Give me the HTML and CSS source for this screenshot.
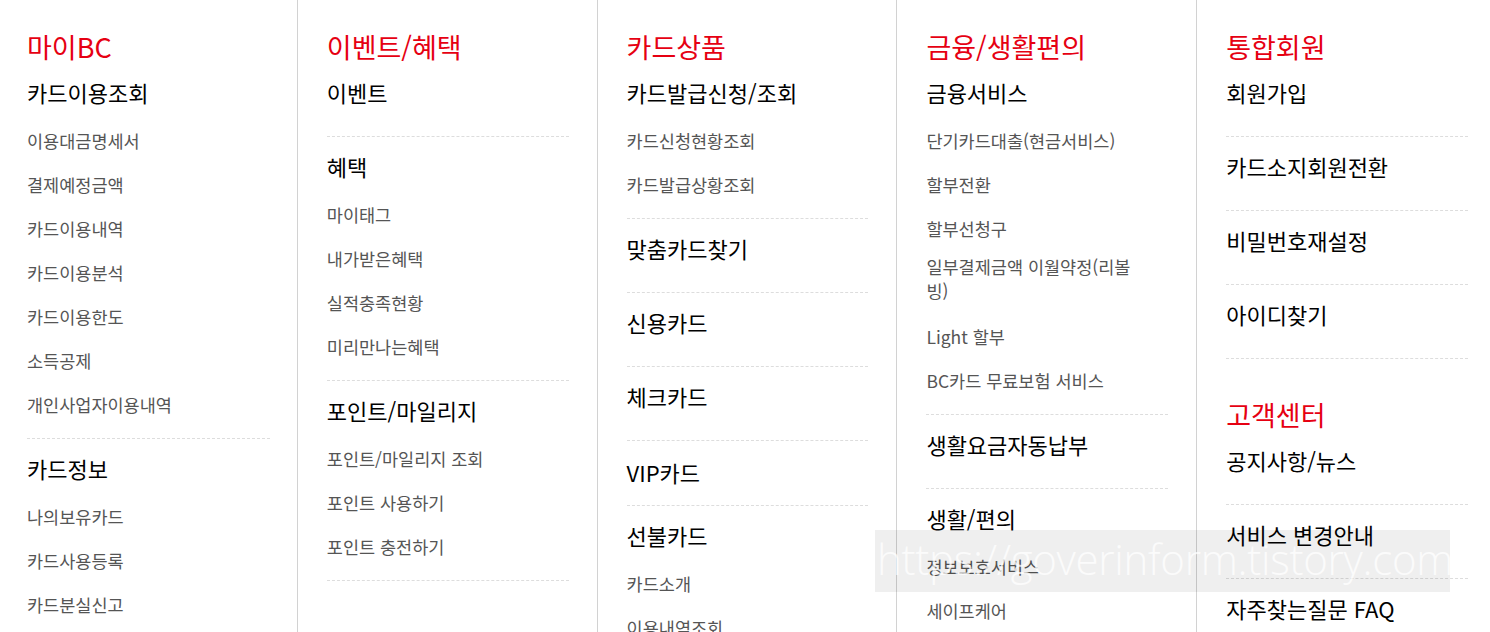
FILE: index.html
```html
<!DOCTYPE html>
<html lang="ko">
  <head>
    <title>BC카드 전체메뉴</title>
    <meta charset="utf-8" />
    <link rel="stylesheet" href="styles.css">
  </head>
  <body>
    <div class="sitemap">
      <div class="col">
        <h2 class="title">마이BC</h2>
        <div class="group">
          <h3 class="sub">카드이용조회</h3>
          <ul class="items">
            <li>이용대금명세서</li>
            <li>결제예정금액</li>
            <li>카드이용내역</li>
            <li>카드이용분석</li>
            <li>카드이용한도</li>
            <li>소득공제</li>
            <li>개인사업자이용내역</li>
          </ul>
        </div>
        <div class="group">
          <h3 class="sub">카드정보</h3>
          <ul class="items">
            <li>나의보유카드</li>
            <li>카드사용등록</li>
            <li>카드분실신고</li>
          </ul>
        </div>
      </div>

      <div class="col">
        <h2 class="title">이벤트/혜택</h2>
        <div class="group">
          <h3 class="sub">이벤트</h3>
        </div>
        <div class="group">
          <h3 class="sub">혜택</h3>
          <ul class="items">
            <li>마이태그</li>
            <li>내가받은혜택</li>
            <li>실적충족현황</li>
            <li>미리만나는혜택</li>
          </ul>
        </div>
        <div class="group">
          <h3 class="sub">포인트/마일리지</h3>
          <ul class="items">
            <li>포인트/마일리지 조회</li>
            <li>포인트 사용하기</li>
            <li>포인트 충전하기</li>
          </ul>
        </div>
        <div class="group"></div>
      </div>

      <div class="col">
        <h2 class="title">카드상품</h2>
        <div class="group">
          <h3 class="sub">카드발급신청/조회</h3>
          <ul class="items">
            <li>카드신청현황조회</li>
            <li>카드발급상황조회</li>
          </ul>
        </div>
        <div class="group">
          <h3 class="sub">맞춤카드찾기</h3>
        </div>
        <div class="group">
          <h3 class="sub">신용카드</h3>
        </div>
        <div class="group">
          <h3 class="sub">체크카드</h3>
        </div>
        <div class="group compact">
          <h3 class="sub">VIP카드</h3>
        </div>
        <div class="group">
          <h3 class="sub">선불카드</h3>
          <ul class="items">
            <li>카드소개</li>
            <li>이용내역조회</li>
          </ul>
        </div>
      </div>

      <div class="col">
        <h2 class="title">금융/생활편의</h2>
        <div class="group">
          <h3 class="sub">금융서비스</h3>
          <ul class="items">
            <li>단기카드대출(현금서비스)</li>
            <li>할부전환</li>
            <li>할부선청구</li>
            <li class="wrap">일부결제금액 이월약정(리볼빙)</li>
            <li>Light 할부</li>
            <li>BC카드 무료보험 서비스</li>
          </ul>
        </div>
        <div class="group">
          <h3 class="sub">생활요금자동납부</h3>
        </div>
        <div class="group">
          <h3 class="sub">생활/편의</h3>
          <ul class="items">
            <li>정보보호서비스</li>
            <li>세이프케어</li>
          </ul>
        </div>
      </div>

      <div class="col">
        <h2 class="title">통합회원</h2>
        <div class="group">
          <h3 class="sub">회원가입</h3>
        </div>
        <div class="group">
          <h3 class="sub">카드소지회원전환</h3>
        </div>
        <div class="group">
          <h3 class="sub">비밀번호재설정</h3>
        </div>
        <div class="group">
          <h3 class="sub">아이디찾기</h3>
        </div>
        <div class="group"></div>

        <h2 class="title second">고객센터</h2>
        <div class="group">
          <h3 class="sub">공지사항/뉴스</h3>
        </div>
        <div class="group">
          <h3 class="sub">서비스 변경안내</h3>
        </div>
        <div class="group">
          <h3 class="sub">자주찾는질문 FAQ</h3>
        </div>
      </div>
    </div>

    <div class="watermark">https://goverinform.tistory.com</div>
  </body>
</html>
```

FILE: styles.css
```css
html, body {
  margin: 0;
  padding: 0;
  background: #fff;
}

body {
  font-family: "Noto Sans CJK KR", "Noto Sans", sans-serif;
  color: #111;
  overflow: hidden;
}

.sitemap {
  display: flex;
  height: 632px;
}

.col {
  width: 300px;
  box-sizing: border-box;
  padding: 31px 28px 0 29px;
  border-right: 1px solid #d2d2d2;
}

.col:first-child {
  width: 298px;
  padding-left: 27px;
  padding-right: 27px;
}

.col:last-child {
  width: 293px;
  border-right: none;
  padding-right: 22px;
}

.title {
  margin: 0;
  font-size: 27px;
  line-height: 32px;
  font-weight: 400;
  color: #e60012;
}

.title.second {
  margin-top: 40px;
}

.group {
  padding: 15px 0 11px;
  border-bottom: 1px dashed #ddd;
}

.group:last-child {
  border-bottom: none;
}

.group:empty {
  padding: 0;
  border-bottom: none;
}

.group.compact {
  padding: 17px 0 0;
}

.sub {
  margin: 0 0 19px;
  font-size: 22px;
  line-height: 28px;
  font-weight: 400;
  color: #000;
}

.items {
  list-style: none;
  margin: -6px 0 0;
  padding: 0;
}

.items li {
  padding: 10px 25px 10px 0;
  font-size: 17.5px;
  line-height: 24px;
  color: #555;
}

.items li.wrap {
  padding-top: 4px;
  padding-bottom: 12px;
}

.watermark {
  position: absolute;
  left: 875px;
  top: 530px;
  width: 575px;
  height: 62px;
  overflow: hidden;
  white-space: nowrap;
  background: rgba(0, 0, 0, 0.063);
  color: rgba(255, 255, 255, 0.75);
  font-family: "Open Sans", "Liberation Sans", sans-serif;
  font-weight: 300;
  font-size: 42px;
  line-height: 58px;
  letter-spacing: -0.3px;
  padding-left: 2px;
  box-sizing: border-box;
}
```
